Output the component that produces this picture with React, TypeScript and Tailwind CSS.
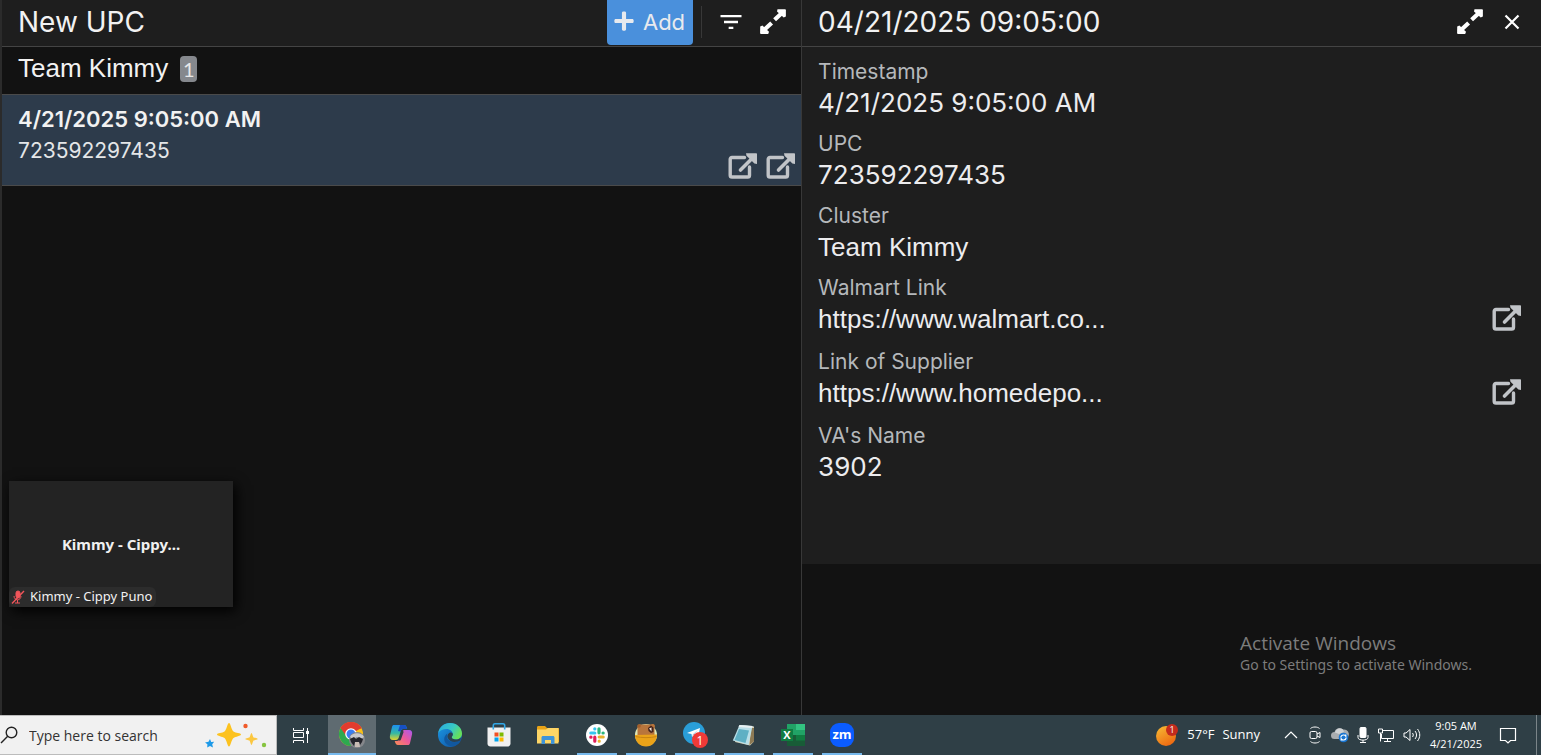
import {useState, ReactNode} from "react";
import {FaPlus} from "react-icons/fa";
import {MdFilterList} from "react-icons/md";

const fields = [
  {label: "Timestamp", value: "4/21/2025 9:05:00 AM"},
  {label: "UPC", value: "723592297435"},
  {label: "Cluster", value: "Team Kimmy", text: true},
  {label: "Walmart Link", value: "https://www.walmart.co...", link: true},
  {label: "Link of Supplier", value: "https://www.homedepo...", link: true},
  {label: "VA's Name", value: "3902"},
];

const ExpandIcon = () => (
  <svg width="26" height="26" viewBox="0 0 26 26" fill="#fff" aria-hidden="true">
    <path d="M17.500 .3H25a.9.9 0 0 1 .9.9V7.500l-2.200 1L17 2.500z" />
    <path d="M22.500 3.500L14.600 10.800M11.600 14L4 21" stroke="#fff" strokeWidth="4.200" />
    <path d="M.2 17.500l2.200-1L9 22.700l-.8 2.300H1a.9.9 0 0 1-.9-.9z" />
  </svg>
);

const OpenIcon = () => (
  <svg width="30" height="26" viewBox="0 0 30 26" fill="none" aria-hidden="true">
    <path
      d="M16.500 4.500H4A1.800 1.800 0 0 0 2.200 6.300V22.200A1.800 1.800 0 0 0 4 24H19.700a1.800 1.800 0 0 0 1.800-1.800V14"
      stroke="#c1c4c8"
      strokeWidth="3.400"
      strokeLinecap="round"
    />
    <path d="M12.500 17L25 4.500" stroke="#c1c4c8" strokeWidth="3.600" strokeLinecap="round" />
    <path d="M18 .3h10.200a.8.800 0 0 1 .8.8V11l-2.600-.6-7.900-7.600z" fill="#c1c4c8" />
  </svg>
);

const ChromeIcon = () => (
  <svg width="28" height="28" viewBox="0 0 28 28" aria-hidden="true">
    <circle cx="13" cy="13" r="12" fill="#fbc116" />
    <path d="M13 13L2.600 7A12 12 0 0 1 23.400 7z" fill="#e33b2e" />
    <path d="M13 13L2.600 7A12 12 0 0 0 13 25l5-9z" fill="#2da94f" />
    <path d="M13 7.500H23.700A12 12 0 0 0 2.600 7l5.600 8z" fill="#e33b2e" />
    <circle cx="13" cy="13" r="5.800" fill="#fff" />
    <circle cx="13" cy="13" r="4.500" fill="#3a7df0" />
    <circle cx="19" cy="19" r="8" fill="#85878b" />
    <path d="M12 16c2-5 12-5 14 0l-3 2-4-2-4 2z" fill="#c8c9cc" />
    <path d="M12 18l4-2 2 2 3-2 4 2-1 3-2 3-1-3h-4l-1 4-3-4z" fill="#24252b" />
    <path d="M17 21h4l1 5h-5z" fill="#c9bdb4" />
  </svg>
);

const CopilotIcon = () => (
  <svg width="24" height="22" viewBox="0 0 24 22" aria-hidden="true">
    <defs>
      <linearGradient id="cpA" x1="0" y1="0" x2="0" y2="1">
        <stop stopColor="#1d8ff0" />
        <stop offset=".55" stopColor="#35b8a4" />
        <stop offset="1" stopColor="#e4d32c" />
      </linearGradient>
      <linearGradient id="cpB" x1="1" y1="0" x2="0" y2="1">
        <stop stopColor="#a958f0" />
        <stop offset=".5" stopColor="#ec5a9a" />
        <stop offset="1" stopColor="#fb9052" />
      </linearGradient>
    </defs>
    <path d="M5 1h10c2 0 2.600 2 3.200 4H14c-1.400 0-2 1-2.400 2.500L10 13c-.6 2-1.500 3-3 3H4c-2.500 0-3.700-2-3-4.500L3 3c.4-1.400 1-2 2-2z" fill="url(#cpA)" />
    <path d="M11 1h4c2 0 2.600 2 3.200 4H14c-1.400 0-2 1-2.400 2.500L9 7z" fill="#1650c4" />
    <path d="M19 21H9c-2 0-2.700-1.800-3.300-4H8c1.500 0 2.500-1 3-2.500l2-6C13.600 6.500 14.500 6 16 6h4c2.500 0 3.700 2 3 4.500L21 19c-.4 1.400-1 2-2 2z" fill="url(#cpB)" />
    <path d="M13.500 8L10.800 15.500" stroke="#2f3f46" strokeWidth="2.200" strokeLinecap="round" />
  </svg>
);

const EdgeIcon = () => (
  <svg width="24" height="24" viewBox="0 0 24 24" aria-hidden="true">
    <defs>
      <linearGradient id="edA" x1="0" y1="0" x2="1" y2=".5">
        <stop stopColor="#2aa9e0" />
        <stop offset=".6" stopColor="#38c8c4" />
        <stop offset="1" stopColor="#66e05a" />
      </linearGradient>
      <linearGradient id="edB" x1="0" y1="0" x2="1" y2="1">
        <stop stopColor="#1b9be6" />
        <stop offset="1" stopColor="#0f4d9e" />
      </linearGradient>
    </defs>
    <circle cx="12" cy="12" r="12" fill="url(#edB)" />
    <path d="M.2 10C1.300 4 6 0 12 0c7 0 12 5 12 10.500 0 4-3 6-6.200 6-2.600 0-4.300-1-4.300-2 0-.6 1.300-1.500 1.300-3.500C14.800 8.500 12 6 8.600 6 5 6 2 7.500.2 10z" fill="url(#edA)" />
    <path d="M9.500 10.500c-2.500 5.500 2.500 11 12 7.500.6-.3 1 .2.700.7C18 24.500 11 24 8 20.500c-3-3.300-2-8 1.500-10z" fill="#11589f" />
    <path d="M14 15c1.500 2 6.500 2.200 8.800-.5l-.6 3c-4 2-10 2.500-12.500-2.500-.8-2 0-4 1.500-5 2.500-1.500 4.500.500 3.400 2.600-.4.800-1.200 1.300-.6 2.400z" fill="#2c4250" />
  </svg>
);

const StoreIcon = () => (
  <svg width="24" height="24" viewBox="0 0 24 24" aria-hidden="true">
    <path d="M.5 4.500h23v16c0 1.700-1.300 3-3 3h-17c-1.700 0-3-1.300-3-3z" fill="#f0f0f0" />
    <path d="M6.300 6.500V2.500c0-1 .7-1.700 1.700-1.700h8c1 0 1.700.7 1.700 1.700v4" stroke="#31a8e8" strokeWidth="1.600" fill="none" />
    <path d="M7.500 9.500h4v4h-4z" fill="#f25022" />
    <path d="M12.500 9.500h4v4h-4z" fill="#7fba00" />
    <path d="M7.500 14.500h4v4h-4z" fill="#00a4ef" />
    <path d="M12.500 14.500h4v4h-4z" fill="#ffb900" />
  </svg>
);

const FolderIcon = () => (
  <svg width="22" height="20" viewBox="0 0 22 20" aria-hidden="true">
    <path d="M0 2.500C0 1.700.5 1 1.300 1H8l2 2h11c.6 0 1 .4 1 1v13H0z" fill="#e8a317" />
    <path d="M0 4.500h9L11 3h10.500v15.500H0z" fill="#fdd667" />
    <path d="M4.500 19v-6.500c0-.8.700-1.500 1.500-1.500h10c.8 0 1.500.7 1.500 1.500V19H14v-4H8v4z" fill="#3f94d8" />
  </svg>
);

const SlackIcon = () => (
  <svg width="22" height="22" viewBox="0 0 22 22" strokeWidth="3.200" strokeLinecap="round" aria-hidden="true">
    <circle cx="11" cy="11" r="11" fill="#fff" />
    <path d="M8.800 4.800v.2M4.800 9h4" stroke="#36c5f0" />
    <path d="M13 4.800V8.800M17 9h.2" stroke="#2eb67d" />
    <path d="M13.200 13h4M13.200 17v.2" stroke="#ecb22e" />
    <path d="M8.800 13.200v4M4.800 13.200h.2" stroke="#e01e5a" />
  </svg>
);

const BearIcon = () => (
  <svg width="24" height="24" viewBox="0 0 24 24" aria-hidden="true">
    <circle cx="12" cy="12" r="11" fill="#dfe7b4" />
    <path d="M3.500 14V5C3 2 5 .5 7 1.500h10C20 .2 22 2.500 20.500 5v9z" fill="#b8753c" />
    <circle cx="5" cy="3" r="1.800" fill="#a25f2b" />
    <path d="M14 5l3-2.500 2.500 2V9L17 10l-2.500-2z" fill="#47241a" />
    <path d="M15 5.500l2.500-1v4z" fill="#f0e6dc" />
    <path d="M1 12l22-.5C23 19 18 23.500 12 23.500S1 19 1 12z" fill="#eaa319" />
    <path d="M1.500 13.500c6 1.500 15 1.500 21 0" stroke="#c98512" fill="none" />
  </svg>
);

const TelegramIcon = () => (
  <svg width="26" height="26" viewBox="0 0 26 26" aria-hidden="true">
    <circle cx="12" cy="11" r="11" fill="#2a9ed8" />
    <path d="M5 11L18 6l-2 10-4-2.500-2 1.500-.5-3z" fill="#fff" />
    <path d="M10 14l1-2 5-4-4 5z" fill="#b6d6e8" />
    <circle cx="18" cy="18" r="8" fill="#f03a37" />
    <text x="18" y="22.500" textAnchor="middle" fontSize="12" fill="#fff" fontFamily="Open Sans, sans-serif">1</text>
  </svg>
);

const NotepadIcon = () => (
  <svg width="24" height="22" viewBox="0 0 24 22" aria-hidden="true">
    <path d="M8 1l14 1.500v15L18 21.500 3 18z" fill="#d8d2b8" />
    <path d="M19 4h3v13.500L17.500 21z" fill="#8c7a55" />
    <path d="M7.500 1L20.500 2 16.500 21 .8 16.500z" fill="#b9dfe8" />
    <path d="M7 5l10 1.500L13.500 19 2.500 16z" fill="#5fb0c4" />
    <path d="M7.500 1l13 1-.6 2L6.500 3z" fill="#e8f0f2" />
  </svg>
);

const ExcelIcon = () => (
  <svg width="24" height="22" viewBox="0 0 24 22" aria-hidden="true">
    <path d="M6 0h18v22H6z" fill="#21a366" />
    <path d="M15 0h9v6h-9z" fill="#33c481" />
    <path d="M6 11h18v11H6z" fill="#185c37" />
    <path d="M15 11h9v5.500h-9z" fill="#107c41" />
    <path d="M0 5h12v12H0z" fill="#107c41" />
    <text x="6" y="15" textAnchor="middle" fontSize="11" fontWeight="700" fill="#fff" fontFamily="Open Sans, sans-serif">X</text>
  </svg>
);

const ZoomIcon = () => (
  <svg width="24" height="24" viewBox="0 0 24 24" aria-hidden="true">
    <rect width="24" height="24" rx="9" fill="#0b5cff" />
    <text x="12" y="16" textAnchor="middle" fontSize="13" fontWeight="700" fill="#fff" fontFamily="Open Sans, sans-serif">zm</text>
  </svg>
);

const apps: {name: string; icon: ReactNode; bar: string}[] = [
  {name: "Chrome", icon: <ChromeIcon />, bar: "w-12"},
  {name: "Copilot", icon: <CopilotIcon />, bar: ""},
  {name: "Edge", icon: <EdgeIcon />, bar: ""},
  {name: "Store", icon: <StoreIcon />, bar: ""},
  {name: "File Explorer", icon: <FolderIcon />, bar: ""},
  {name: "Slack", icon: <SlackIcon />, bar: "w-10"},
  {name: "Time tracker", icon: <BearIcon />, bar: "w-10"},
  {name: "Telegram", icon: <TelegramIcon />, bar: "w-10"},
  {name: "Notepad", icon: <NotepadIcon />, bar: "w-10"},
  {name: "Excel", icon: <ExcelIcon />, bar: "w-10"},
  {name: "Zoom", icon: <ZoomIcon />, bar: "w-10"},
];

const ListPanel = () => (
  <section className="flex w-[52.05%] flex-col border-l-2 border-l-[#2b2b2b] border-r border-r-[#383838]">
    <header className="flex h-[47px] items-start bg-[#1e1e1e] border-b border-[#444] pl-4 pr-[15px]">
      <h1 className="mt-3 flex-1 text-[28px] leading-5 text-[#f2f2f2]">New UPC</h1>
      <button className="flex h-[45px] items-center gap-2 rounded-b bg-[#4a90dc] pl-[6px] pr-2 text-[22px] text-[#e8eaee]">
        <FaPlus size={22} className="mb-1" />
        Add
      </button>
      <div className="mt-[6px] ml-2 h-8 w-px bg-[#383838]" />
      <button aria-label="Filter" className="mt-2 ml-[15px]">
        <MdFilterList size={28} color="#fff" />
      </button>
      <button aria-label="Expand list" className="mt-[9px] ml-[15px]">
        <ExpandIcon />
      </button>
    </header>
    <div className="flex h-12 items-start gap-3 border-b border-[#4a4a4a] pl-4 pt-[5px]">
      <h2 className="font-['Liberation_Sans',sans-serif] text-[26px] leading-8 text-[#f2f2f2]">Team Kimmy</h2>
      <span className="mt-1 flex h-[26px] w-[17px] items-center justify-center rounded bg-[#85888d] font-[Lato,sans-serif] text-[20px] text-[#e8e8e8]">
        1
      </span>
    </div>
    <div className="flex h-[91px] border-b border-[#4a4a4a] bg-[#2d3b4b] pl-4 pr-[5px]">
      <div className="flex-1 pt-2">
        <div className="text-[22px] font-semibold leading-8 text-[#f2f2f2]">4/21/2025 9:05:00 AM</div>
        <div className="text-[21px] leading-8 text-[#e4e6e8]">723592297435</div>
      </div>
      <div className="flex items-end gap-2 pb-[6px]">
        <button aria-label="Open Walmart link">
          <OpenIcon />
        </button>
        <button aria-label="Open supplier link">
          <OpenIcon />
        </button>
      </div>
    </div>
  </section>
);

const DetailPanel = () => (
  <section className="min-w-0 flex-1">
    <div className="bg-[#1e1e1e] pb-[81px]">
      <header className="flex h-[47px] items-start border-b border-[#444] pl-4 pr-[21px]">
        <h2 className="mt-3 flex-1 text-[28px] leading-5 text-[#f2f2f2]">04/21/2025 09:05:00</h2>
        <button aria-label="Expand details" className="mt-[9px]">
          <ExpandIcon />
        </button>
        <button aria-label="Close" className="mt-[14px] ml-[21px]">
          <svg width="16" height="16" viewBox="0 0 16 16" stroke="#fff" strokeWidth="2.200" aria-hidden="true">
            <path d="M1.500 1.500l13 13M14.500 1.500l-13 13" />
          </svg>
        </button>
      </header>
      <dl className="flex flex-col gap-3 pl-4 pr-[19px] pt-3">
        {fields.map((field) => (
          <div key={field.label}>
            <dt className="text-[21px] leading-[26px] text-[#b5b8bb]">{field.label}</dt>
            {field.link ? (
              <dd className="mt-[2px] flex h-[34px] items-start justify-between font-['Liberation_Sans',sans-serif] text-[26px] leading-8 text-[#ececee]">
                {field.value}
                <button aria-label={`Open ${field.label}`} className="mt-[2px]">
                  <OpenIcon />
                </button>
              </dd>
            ) : (
              <dd
                className={`mt-[2px] text-[26px] leading-8 text-[#ececee] ${
                  field.text ? "font-['Liberation_Sans',sans-serif]" : ""
                }`}
              >
                {field.value}
              </dd>
            )}
          </div>
        ))}
      </dl>
    </div>
  </section>
);

const VideoTile = () => (
  <div className="absolute bottom-[108px] left-[9px] flex h-[126px] w-56 items-center justify-center bg-[#232323] font-['Noto_Sans',sans-serif] shadow-[3px_4px_12px_#000000]">
    <div className="text-[15px] font-bold text-[#f0f0f0]">Kimmy - Cippy...</div>
    <div className="absolute bottom-0 left-0 flex h-5 items-center gap-[5px] rounded-md bg-[#2c2c2c] pl-[2px] pr-1 text-[13px] text-[#f2f2f2]">
      <svg width="14" height="14" viewBox="0 0 14 14" fill="none" stroke="#f2555a" aria-hidden="true">
        <rect x="5" y="1" width="4" height="7" rx="2" fill="#f2555a" />
        <path d="M3 6c0 5 7 5 7 0M6.500 10v3M4 13h5" />
        <path d="M1 13.500L13 1" strokeWidth="1.400" />
      </svg>
      Kimmy - Cippy Puno
    </div>
  </div>
);

const Tray = () => (
  <div className="ml-auto flex items-center text-white">
    <button className="flex items-center gap-2 text-[13px]">
      <svg width="24" height="24" viewBox="0 0 24 24" aria-hidden="true">
        <defs>
          <linearGradient id="sun" x1="0" y1="0" x2=".6" y2="1">
            <stop stopColor="#f6bd35" />
            <stop offset="1" stopColor="#ee6a12" />
          </linearGradient>
        </defs>
        <circle cx="11" cy="13" r="10" fill="url(#sun)" />
        <circle cx="17" cy="7" r="6" fill="#c42b1c" />
        <text x="17" y="10" textAnchor="middle" fontSize="9" fill="#fff">1</text>
      </svg>
      <span>57°F</span>
      <span>Sunny</span>
    </button>
    <svg className="ml-6" width="14" height="14" viewBox="0 0 14 14" fill="none" stroke="#fff" strokeWidth="1.200" aria-hidden="true">
      <path d="M1 10l6-6 6 6" />
    </svg>
    <div className="ml-[9px] flex items-center gap-2">
      <svg width="16" height="18" viewBox="0 0 16 18" fill="none" stroke="#fff" aria-hidden="true">
        <rect x="3" y="5.500" width="7" height="7" rx="1.500" />
        <path d="M10 8l3-1.500v5L10 10M3.500 2.500c2-2 7-2 9 0M3.500 15.500c2 2 7 2 9 0" />
      </svg>
      <svg width="18" height="16" viewBox="0 0 18 16" aria-hidden="true">
        <path d="M3.500 12a3.500 3.500 0 0 1 0-7A5 5 0 0 1 12 2.500 4.500 4.500 0 0 1 14 12z" fill="#a9adb0" />
        <path d="M4 5.500a5 5 0 0 1 8-3l1 2.500-5 2z" fill="#d0d3d5" />
        <circle cx="12.500" cy="10.500" r="4.800" fill="#1976d2" />
        <path d="M9.800 10c.7-2.500 4-2.500 5-.8V7.500M15.200 11c-.7 2.500-4 2.500-5 .8v1.700" stroke="#fff" strokeWidth="1.200" fill="none" />
      </svg>
      <svg width="12" height="18" viewBox="0 0 12 18" fill="none" stroke="#fff" aria-hidden="true">
        <rect x="3" y="1.500" width="6" height="10" rx="1" fill="#fff" />
        <path d="M1 9v2.500c0 3.500 10 3.500 10 0V9M6 14v2.500M3 16.500h6" />
      </svg>
      <svg width="18" height="16" viewBox="0 0 18 16" fill="none" stroke="#fff" aria-hidden="true">
        <path d="M6 3.500h10.500v8H4.500V7M10.500 11.500v3M7 14.500h7M1.500 2v4h4V2zM3.500 6v8.500" />
      </svg>
      <svg width="18" height="14" viewBox="0 0 18 14" fill="none" stroke="#fff" aria-hidden="true">
        <path d="M1 5v4h2l4 3.500V1.500L3 5zM9.500 5c1 1.500 1 2.500 0 4M12 3c2 2.500 2 5.500 0 8M14.500 1c3 4 3 8 0 12" />
      </svg>
    </div>
    <div className="ml-2 w-[54px] text-center text-[11px] leading-[18px]">
      <div>9:05 AM</div>
      <div>4/21/2025</div>
    </div>
    <button aria-label="Notifications" className="ml-4">
      <svg width="18" height="18" viewBox="0 0 18 18" fill="none" stroke="#fff" strokeWidth="1.200" aria-hidden="true">
        <path d="M1.500 2.500h15v12h-5L9 17l-2.500-2.500h-5z" />
      </svg>
    </button>
    <div className="ml-[19px] h-10 w-[5px] border-l border-[#7b8589]" />
  </div>
);

const Taskbar = () => {
  const [query, setQuery] = useState("");

  return (
    <footer className="flex h-10 shrink-0 bg-[#2f3f46] font-['Open_Sans',sans-serif]">
      <label className="flex w-[277px] items-center border border-l-0 border-[#bcbcbc] bg-[#f1f1f1]">
        <svg width="18" height="18" viewBox="0 0 18 18" fill="none" stroke="#222" strokeWidth="1.400" aria-hidden="true">
          <circle cx="11.500" cy="6.500" r="5.300" />
          <path d="M7.700 10.300L1 17" />
        </svg>
        <input
          aria-label="Search"
          value={query}
          onChange={(e) => setQuery(e.target.value)}
          placeholder="Type here to search"
          className="ml-[11px] min-w-0 flex-1 text-[14px] outline-none placeholder:text-[#333]"
        />
        <svg className="mr-2" width="64" height="30" viewBox="0 0 64 30" aria-hidden="true">
          <path d="M25 3c1.500 0 2.500 7 4.500 8.500S37 13 37 14.500s-5.500 2-7.500 3.500-3 8.500-4.500 8.500-2.500-7-4.500-8.500-7.500-2-7.500-3.500 5.500-1.500 7.500-3S23.500 3 25 3z" fill="#fcc21f" />
          <path d="M47.500 13c.8 0 1.200 4 2.200 4.500s4 .7 4 1.500-3 1-4 1.500-1.400 4.500-2.200 4.500-1.200-4-2.200-4.500-4-.7-4-1.500 3-1 4-1.500 1.400-4.500 2.200-4.500z" fill="#fbc740" />
          <path d="M6 19l1.200 3 3-.2-2 2.400.8 3.200-3-1.500-2.800 1.500.2-3.200L1 22.500l3.500-.7z" fill="#1e9ae8" />
          <circle cx="41.500" cy="6" r="2.200" fill="#f15a29" />
          <circle cx="60" cy="25" r="2.200" fill="#86c440" />
        </svg>
      </label>
      <button aria-label="Task view" className="flex w-12 items-center justify-center">
        <svg width="18" height="18" viewBox="0 0 18 18" fill="none" stroke="#fff" aria-hidden="true">
          <path d="M1.500 2v2.500h10V2M1.500 17v-2.500h10V17M1.500 6.500h10v5h-10zM15.500 2v15" />
          <path d="M14 5h3v3h-3z" fill="#fff" stroke="none" />
        </svg>
      </button>
      <div className="ml-[3px] flex gap-px">
        {apps.map((app) => (
          <button
            key={app.name}
            aria-label={app.name}
            className={`flex h-10 w-12 flex-col items-center ${app.name === "Chrome" ? "bg-[#5f6b71]" : ""}`}
          >
            <span className="flex flex-1 items-center">{app.icon}</span>
            <span className={`-mt-[2px] h-[2px] bg-[#76b9ed] ${app.bar}`} />
          </button>
        ))}
      </div>
      <Tray />
    </footer>
  );
};

const App = () => {
  return (
    <div className="flex min-h-screen flex-col bg-[#121212] font-[Inter,sans-serif]">
      <main className="relative flex flex-1">
        <ListPanel />
        <DetailPanel />
        <VideoTile />
        <div className="absolute bottom-10 right-[69px] text-[#7c7c7c]">
          <div className="font-['Open_Sans',sans-serif] text-[19px] leading-6">Activate Windows</div>
          <div className="font-['Noto_Sans',sans-serif] text-[14px] leading-5">Go to Settings to activate Windows.</div>
        </div>
      </main>
      <Taskbar />
    </div>
  );
};

export default App;
